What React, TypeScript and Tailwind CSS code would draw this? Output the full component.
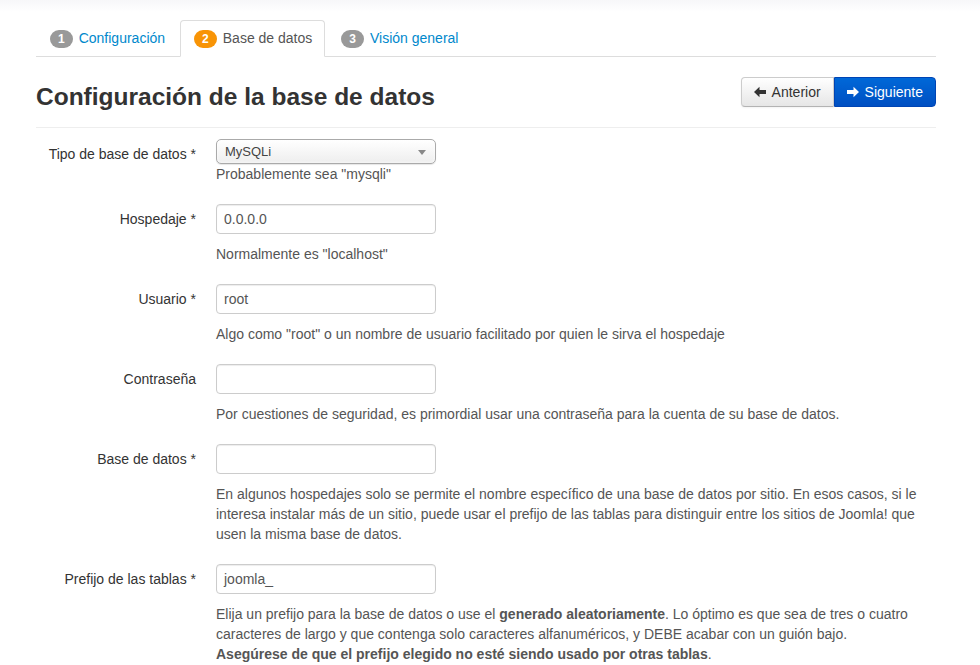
import type { ReactNode } from "react";

const ArrowLeft = () => (
    <svg width="12" height="12" viewBox="0 0 12 12" className="inline-block">
        <path d="M0 6 L5.5 0.8 L5.5 4 L12 4 L12 8 L5.5 8 L5.5 11.2 Z" fill="currentColor" />
    </svg>
);

const ArrowRight = () => (
    <svg width="12" height="12" viewBox="0 0 12 12" className="inline-block">
        <path d="M12 6 L6.5 0.8 L6.5 4 L0 4 L0 8 L6.5 8 L6.5 11.2 Z" fill="currentColor" />
    </svg>
);

const Tab = ({ n, label, active }: { n: number; label: string; active?: boolean }) => (
    <li className="mr-[2px] -mb-px">
        <div
            className={
                active
                    ? "flex items-center h-[37px] px-3 border border-[#ddd] border-b-transparent rounded-t bg-white text-[#555]"
                    : "flex items-center h-[37px] px-3 border border-transparent text-[#0088cc]"
            }
        >
            <span
                className={
                    "inline-flex items-center justify-center h-[18px] px-[8px] rounded-full text-white text-[12px] font-bold mr-[6px] ml-[1px] " +
                    (active ? "bg-[#f89406]" : "bg-[#999]")
                }
            >
                {n}
            </span>
            <span className="text-[14px]">{label}</span>
        </div>
    </li>
);

const Row = ({ label, children, help }: { label: string; children: ReactNode; help?: ReactNode }) => (
    <div className="flex mb-5">
        <label className="w-[160px] shrink-0 text-right pt-[5px] text-[#333] text-[14px] leading-5">{label}</label>
        <div className="ml-5 flex-1">
            {children}
            {help}
        </div>
    </div>
);

const TextInput = ({ value }: { value?: string }) => (
    <div className="w-[220px] h-[30px] border border-[#ccc] rounded bg-white shadow-[inset_0_1px_1px_rgba(0,0,0,0.075)] px-[7px] flex items-center text-[14px] text-[#555]">
        {value}
    </div>
);

const Help = ({ children }: { children: ReactNode }) => (
    <p className="mt-[10px] text-[14px] leading-5 text-[#555]">{children}</p>
);

export default function App() {
    return (
        <div className="min-h-[665px] bg-white text-[14px] text-[#333]" style={{ fontFamily: '"Liberation Sans", Arial, sans-serif' }}>
            <div className="h-[12px] bg-gradient-to-b from-[#f7f7f9] to-white" />
            <div className="w-[900px] ml-[36px] pt-[8px]">
                <ul className="flex border-b border-[#ddd] pl-0">
                    <Tab n={1} label="Configuración" />
                    <Tab n={2} label="Base de datos" active />
                    <Tab n={3} label="Visión general" />
                </ul>

                <div className="flex items-start justify-between mt-[20px] pb-[15px] border-b border-[#eee]">
                    <h3 className="text-[24.5px] font-bold text-[#333] leading-[30px] mt-[5px]">Configuración de la base de datos</h3>
                    <div className="flex">
                        <button className="flex items-center gap-[6px] h-[30px] px-3 text-[14px] text-[#333] border border-[#ccc] border-b-[#b3b3b3] rounded-l bg-gradient-to-b from-white to-[#e6e6e6] shadow-[inset_0_1px_0_rgba(255,255,255,0.2),0_1px_2px_rgba(0,0,0,0.05)]">
                            <ArrowLeft />
                            Anterior
                        </button>
                        <button className="flex items-center gap-[6px] h-[30px] px-3 text-[14px] text-white border border-[#0044b4] rounded-r bg-gradient-to-b from-[#0068d8] to-[#004fc2]">
                            <ArrowRight />
                            Siguiente
                        </button>
                    </div>
                </div>

                <div className="mt-[11px]">
                    <div className="flex mb-5">
                        <label className="w-[160px] shrink-0 text-right pt-[5px] text-[#333] text-[14px] leading-5">Tipo de base de datos *</label>
                        <div className="ml-5 flex-1">
                            <div className="w-[220px] h-[25px] border border-[#aaa] rounded-[5px] bg-gradient-to-b from-white to-[#eee] flex items-center justify-between pl-[8px] pr-[9px] text-[13px] text-[#444] shadow-[0_0_3px_white_inset,0_1px_1px_rgba(0,0,0,0.1)]">
                                <span>MySQLi</span>
                                <svg width="8" height="6" viewBox="0 0 8 6">
                                    <path d="M0 1 L8 1 L4 6 Z" fill="#888" />
                                </svg>
                            </div>
                            <p className="text-[14px] leading-5 text-[#555]">Probablemente sea "mysqli"</p>
                        </div>
                    </div>

                    <Row label="Hospedaje *" help={<Help>Normalmente es "localhost"</Help>}>
                        <TextInput value="0.0.0.0" />
                    </Row>

                    <Row label="Usuario *" help={<Help>Algo como "root" o un nombre de usuario facilitado por quien le sirva el hospedaje</Help>}>
                        <TextInput value="root" />
                    </Row>

                    <Row label="Contraseña" help={<Help>Por cuestiones de seguridad, es primordial usar una contraseña para la cuenta de su base de datos.</Help>}>
                        <TextInput />
                    </Row>

                    <Row
                        label="Base de datos *"
                        help={
                            <Help>
                                En algunos hospedajes solo se permite el nombre específico de una base de datos por sitio. En esos casos, si le
                                <br />
                                interesa instalar más de un sitio, puede usar el prefijo de las tablas para distinguir entre los sitios de Joomla! que
                                <br />
                                usen la misma base de datos.
                            </Help>
                        }
                    >
                        <TextInput />
                    </Row>

                    <Row
                        label="Prefijo de las tablas *"
                        help={
                            <Help>
                                Elija un prefijo para la base de datos o use el <b>generado aleatoriamente</b>. Lo óptimo es que sea de tres o cuatro
                                <br />
                                caracteres de largo y que contenga solo caracteres alfanuméricos, y DEBE acabar con un guión bajo.
                                <br />
                                <b>Asegúrese de que el prefijo elegido no esté siendo usado por otras tablas</b>.
                            </Help>
                        }
                    >
                        <TextInput value="joomla_" />
                    </Row>
                </div>
            </div>
        </div>
    );
}
